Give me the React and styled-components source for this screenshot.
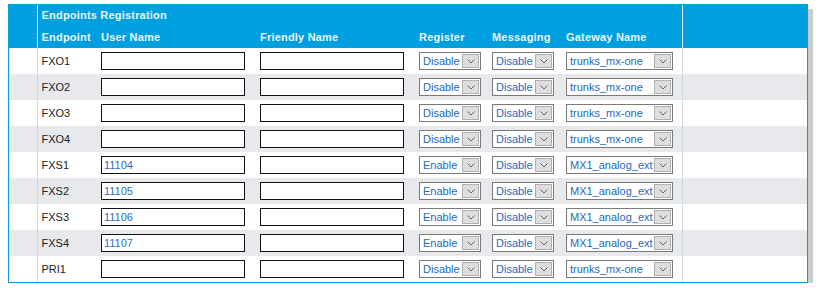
import React from 'react'
import styled, { createGlobalStyle } from 'styled-components'

const GlobalStyle = createGlobalStyle`
  html, body {
    margin: 0;
    padding: 0;
    background: #ffffff;
  }
  body {
    font-family: "Liberation Sans", Arial, sans-serif;
    font-size: 11px;
  }
`

const Page = styled.div`
  padding: 4px 0 0 8px;
`

const Panel = styled.div`
  width: 798px;
  border: 1px solid #009fdf;
  box-shadow: 5px 5px 0 #cccccc;
  background: #ffffff;
`

const Table = styled.table`
  border-collapse: collapse;
  table-layout: fixed;
  width: 798px;

  td, th {
    padding: 0 0 0 4px;
    text-align: left;
    white-space: nowrap;
  }
`

const HeadRow = styled.tr`
  background: #009fdf;
  height: ${(p) => p.h}px;

  th {
    color: #eaf6fc;
    font-weight: bold;
    font-size: 11px;
    letter-spacing: 0.2px;
    vertical-align: middle;
  }
`

const Row = styled.tr`
  height: 26px;
  background: ${(p) => (p.alt ? '#e7e9ed' : '#ffffff')};

  td {
    color: #222222;
    vertical-align: middle;
  }
`

const Gutter = styled.td`
  && {
    padding: 0;
    border-right: 1px solid ${(p) => (p.head ? '#d7eef8' : '#cfd9e4')};
  }
`

const Tail = styled.td`
  && {
    padding: 0;
    border-left: 1px solid ${(p) => (p.head ? '#d7eef8' : '#cfd9e4')};
  }
`

const TextBox = styled.input`
  box-sizing: border-box;
  width: 144px;
  height: 18px;
  border: 1px solid #111111;
  margin: 0;
  padding: 0 2px;
  font-family: "Liberation Sans", Arial, sans-serif;
  font-size: 11px;
  color: #2f6cc4;
  background: #ffffff;
  outline: none;
  display: block;
`

const Select = styled.div`
  box-sizing: border-box;
  width: ${(p) => p.w}px;
  height: 18px;
  border: 1px solid #7a7a7a;
  background: #ffffff;
  display: flex;
  align-items: stretch;
`

const SelectText = styled.span`
  flex: 1;
  padding-left: 3px;
  line-height: 16px;
  color: #2467c2;
  font-size: 11px;
  overflow: hidden;
`

const Arrow = styled.span`
  width: 17px;
  margin: 1px 1px 1px 0;
  background: #dedede;
  border: 1px solid #b0b0b0;
  box-sizing: border-box;
  display: flex;
  align-items: center;
  justify-content: center;
`

function Drop({ w, value }) {
  return (
    <Select w={w}>
      <SelectText>{value}</SelectText>
      <Arrow>
        <svg width="8" height="5" viewBox="0 0 8 5">
          <path d="M0.5 0.5 L4 4 L7.5 0.5" fill="none" stroke="#555" strokeWidth="0.9" />
        </svg>
      </Arrow>
    </Select>
  )
}

const rows = [
  { ep: 'FXO1', user: '', reg: 'Disable', gw: 'trunks_mx-one' },
  { ep: 'FXO2', user: '', reg: 'Disable', gw: 'trunks_mx-one' },
  { ep: 'FXO3', user: '', reg: 'Disable', gw: 'trunks_mx-one' },
  { ep: 'FXO4', user: '', reg: 'Disable', gw: 'trunks_mx-one' },
  { ep: 'FXS1', user: '11104', reg: 'Enable', gw: 'MX1_analog_ext' },
  { ep: 'FXS2', user: '11105', reg: 'Enable', gw: 'MX1_analog_ext' },
  { ep: 'FXS3', user: '11106', reg: 'Enable', gw: 'MX1_analog_ext' },
  { ep: 'FXS4', user: '11107', reg: 'Enable', gw: 'MX1_analog_ext' },
  { ep: 'PRI1', user: '', reg: 'Disable', gw: 'trunks_mx-one' },
]

export default function App() {
  return (
    <Page>
      <GlobalStyle />
      <Panel>
        <Table>
          <colgroup>
            <col style={{ width: 28 }} />
            <col style={{ width: 60 }} />
            <col style={{ width: 159 }} />
            <col style={{ width: 159 }} />
            <col style={{ width: 73 }} />
            <col style={{ width: 74 }} />
            <col style={{ width: 120 }} />
            <col style={{ width: 125 }} />
          </colgroup>
          <thead>
            <HeadRow h={20}>
              <Gutter as="th" head />
              <th colSpan={6}>Endpoints Registration</th>
              <Tail as="th" head />
            </HeadRow>
            <HeadRow h={23}>
              <Gutter as="th" head />
              <th>Endpoint</th>
              <th>User Name</th>
              <th>Friendly Name</th>
              <th>Register</th>
              <th>Messaging</th>
              <th>Gateway Name</th>
              <Tail as="th" head />
            </HeadRow>
          </thead>
          <tbody>
            {rows.map((r, i) => (
              <Row key={r.ep} alt={i % 2 === 1}>
                <Gutter />
                <td>{r.ep}</td>
                <td>
                  <TextBox defaultValue={r.user} />
                </td>
                <td>
                  <TextBox defaultValue="" />
                </td>
                <td>
                  <Drop w={62} value={r.reg} />
                </td>
                <td>
                  <Drop w={62} value="Disable" />
                </td>
                <td>
                  <Drop w={107} value={r.gw} />
                </td>
                <Tail />
              </Row>
            ))}
          </tbody>
        </Table>
      </Panel>
    </Page>
  )
}
